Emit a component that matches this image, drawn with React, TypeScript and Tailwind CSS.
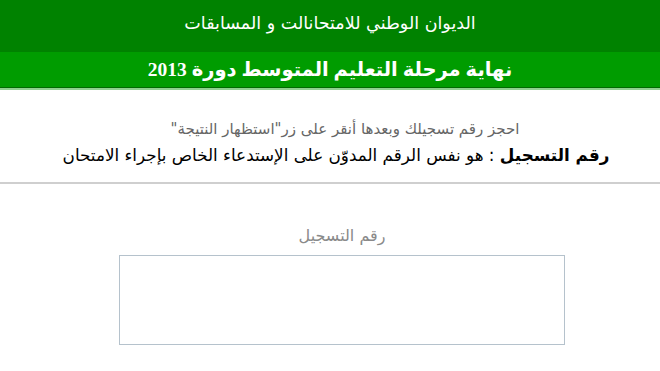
export default function App() {
  return (
    <div
      dir="rtl"
      className="w-[660px] h-[371px] overflow-hidden bg-white"
      style={{ fontFamily: '"DejaVu Sans", "Noto Sans", sans-serif' }}
    >
      {/* header */}
      <div className="h-[52px] bg-[#008200] flex items-center justify-center pb-1">
        <h1 className="text-[17.5px] text-white leading-none">
          الديوان الوطني للامتحانالت و المسابقات
        </h1>
      </div>
      <div className="h-[35px] bg-[#009c00] flex items-center justify-center">
        <h2 className="text-[19.5px] font-bold text-white leading-none font-['Liberation_Serif','DejaVu_Sans',serif]">
          نهاية مرحلة التعليم المتوسط دورة 2013
        </h2>
      </div>
      <div className="h-px bg-[#006a00]" />
      <div className="h-[2px] bg-[#8fd08f]" />

      {/* notice */}
      <div className="pt-[26px] pb-[14px] text-center leading-[26px]">
        <p className="text-[15px] text-[#666666] pl-[30px]">
          احجز رقم تسجيلك وبعدها أنقر على زر"استظهار النتيجة"
        </p>
        <p className="text-[16.8px] text-black pl-[12px]">
          <span className="font-bold">رقم التسجيل</span> : هو نفس الرقم المدوّن على الإستدعاء الخاص بإجراء الامتحان
        </p>
      </div>
      <div className="h-[2px] bg-[#cfcfcf]" />

      {/* form */}
      <div className="pt-[44px] pl-[24px] flex flex-col items-center">
        <label className="text-[16px] text-[#8a8a8a] leading-none mb-[11px]">رقم التسجيل</label>
        <input
          type="text"
          className="w-[446px] h-[90px] border border-[#b5c2cc] outline-none"
        />
      </div>
    </div>
  );
}
